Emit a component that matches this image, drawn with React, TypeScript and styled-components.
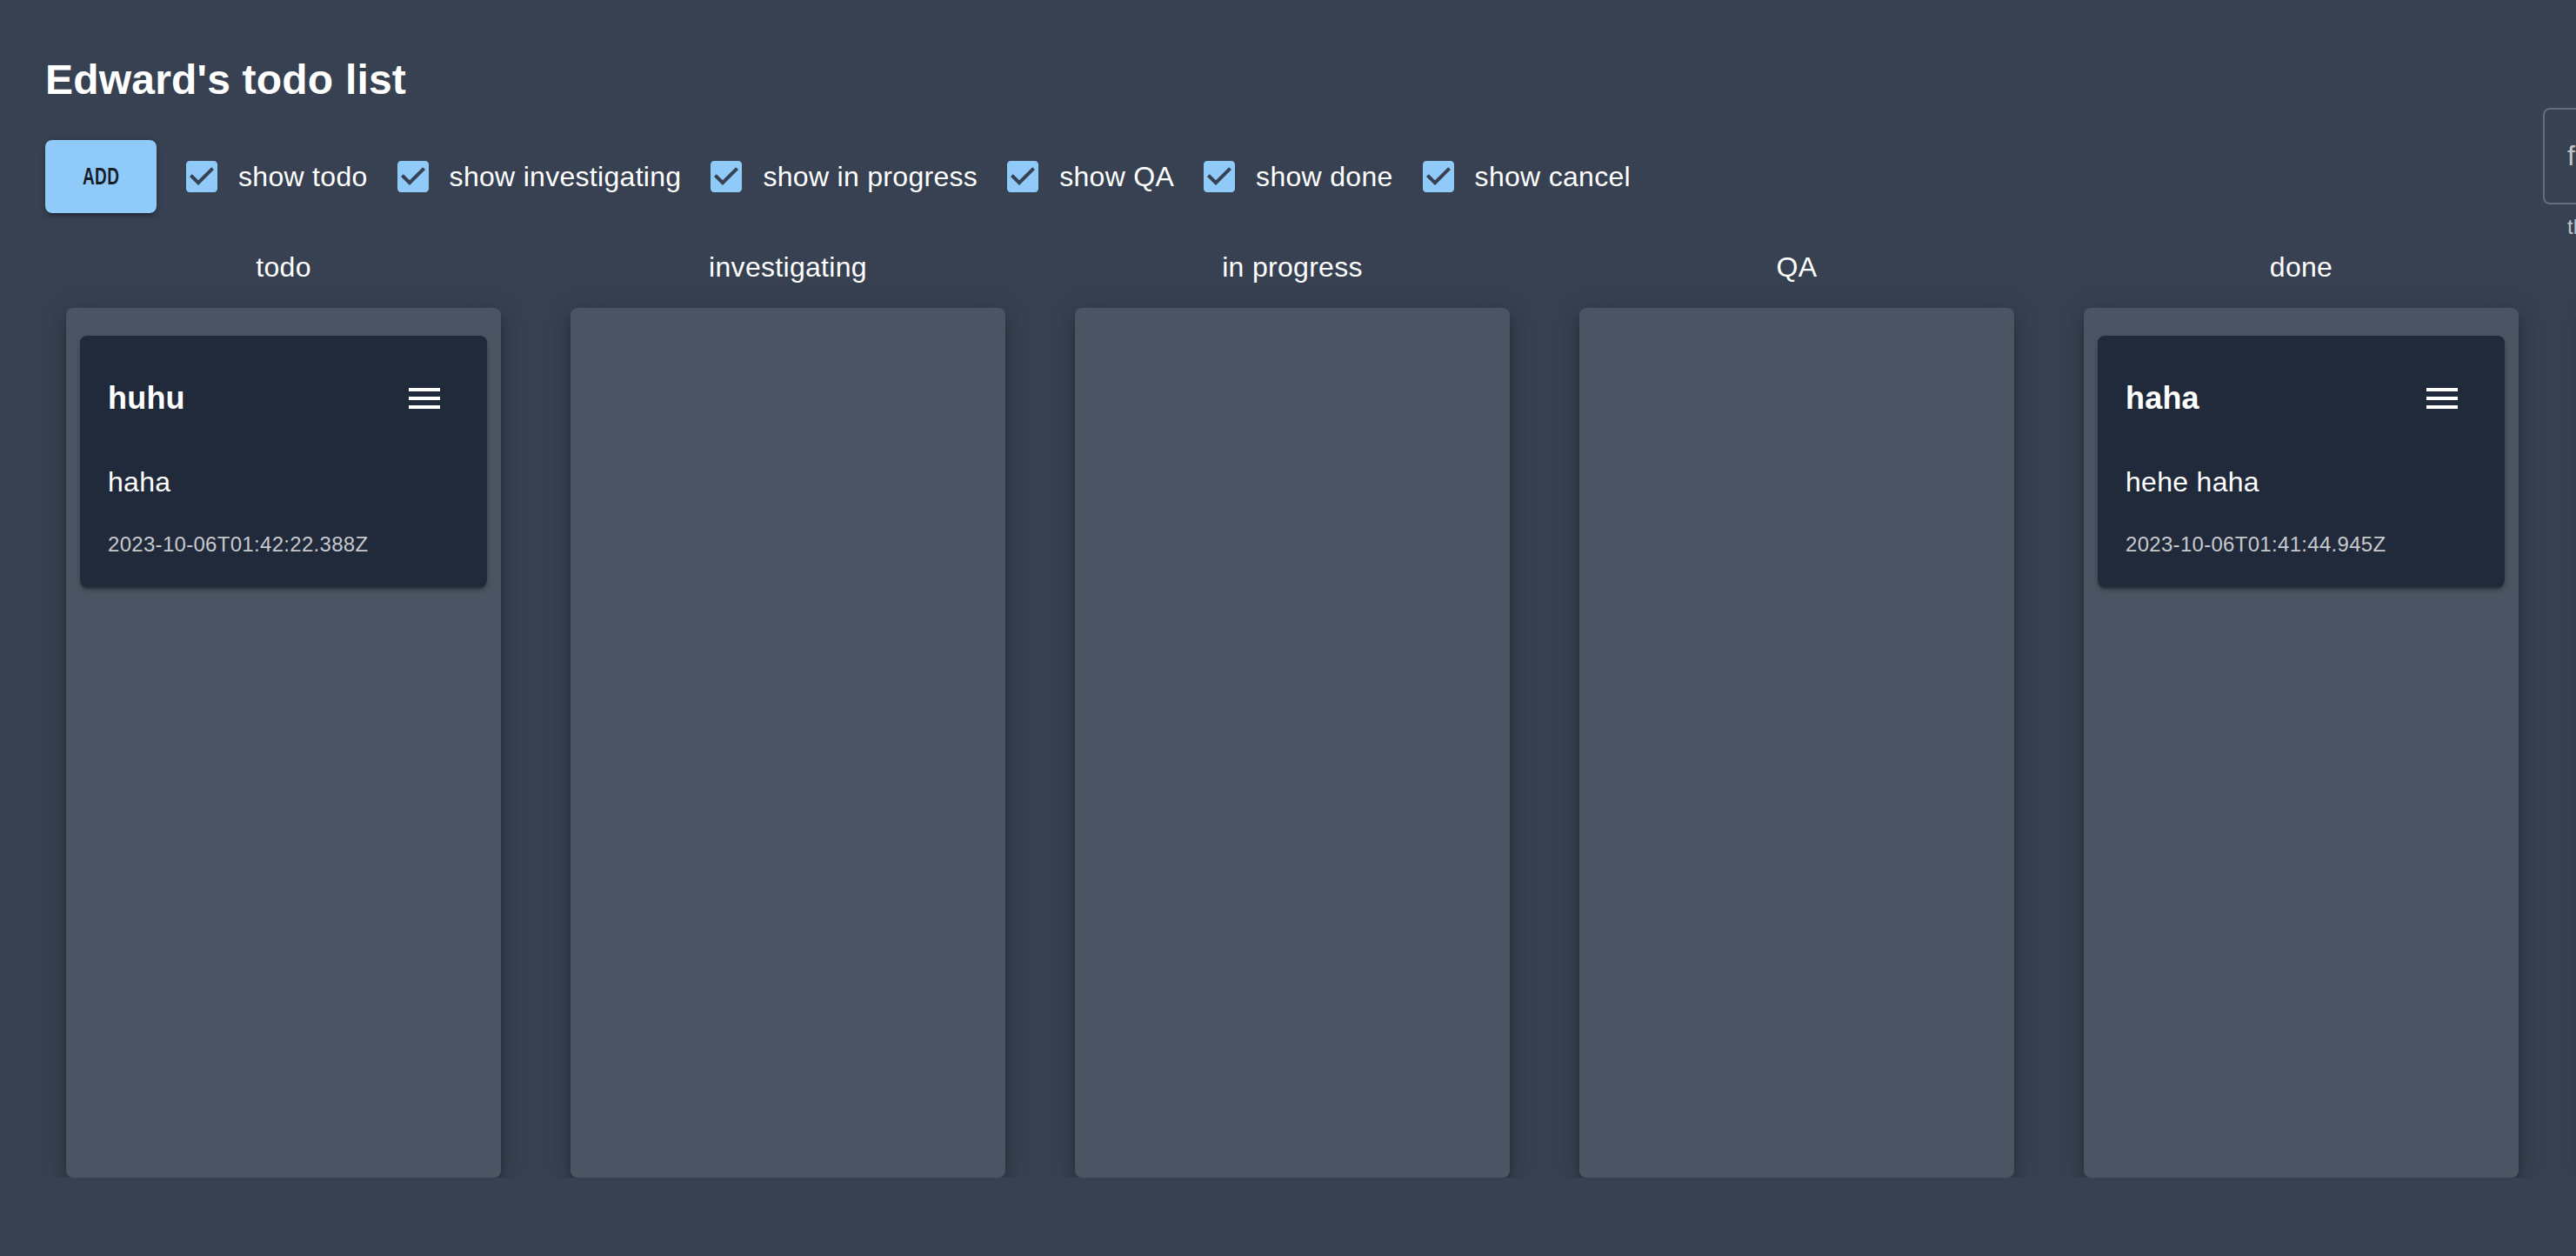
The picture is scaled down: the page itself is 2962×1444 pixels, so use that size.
import React from 'react';
import styled, { createGlobalStyle } from 'styled-components';

const GlobalStyle = createGlobalStyle`
  html, body {
    margin: 0;
    padding: 0;
    background: #374151;
    overflow: hidden;
  }
  body {
    font-family: "Liberation Sans", Arial, Helvetica, sans-serif;
    color: #ffffff;
  }
`;

const Page = styled.div`
  width: max-content;
  padding: 64px 52px 0;
`;

const Title = styled.h1`
  margin: 0;
  font-size: 48px;
  line-height: 56px;
  font-weight: 700;
  letter-spacing: 0.2px;
  color: #ffffff;
`;

const Toolbar = styled.div`
  display: flex;
  align-items: center;
  gap: 34px;
  margin-top: 4px;
`;

const AddButton = styled.button`
  width: 128px;
  height: 84px;
  padding: 0;
  border: 0;
  border-radius: 8px;
  background: #90caf9;
  color: rgba(0, 0, 0, 0.87);
  box-shadow: 0 6px 2px -4px rgba(0, 0, 0, 0.2), 0 4px 4px 0 rgba(0, 0, 0, 0.14),
    0 2px 10px 0 rgba(0, 0, 0, 0.12);
  display: flex;
  align-items: center;
  justify-content: center;
  font-family: inherit;
  cursor: pointer;
`;

const AddText = styled.span`
  display: inline-block;
  font-size: 28px;
  font-weight: 700;
  letter-spacing: 0.5px;
  transform: scaleX(0.68);
`;

const FilterLabel = styled.label`
  display: flex;
  align-items: center;
  gap: 24px;
  cursor: pointer;
`;

const CheckIcon = styled.svg`
  width: 48px;
  height: 48px;
  margin: -6px;
  flex: none;
`;

const FilterText = styled.span`
  font-size: 32px;
  line-height: 48px;
  letter-spacing: 0.3px;
  color: #ffffff;
  white-space: nowrap;
`;

const SearchField = styled.div`
  margin-left: auto;
  width: 576px;
  display: flex;
  flex-direction: column;
`;

const FieldBox = styled.div`
  height: 111px;
  box-sizing: border-box;
  border: 2px solid rgba(255, 255, 255, 0.23);
  border-radius: 8px;
  display: flex;
  align-items: center;
  padding: 0 26px;
  font-size: 32px;
  color: rgba(255, 255, 255, 0.7);
`;

const HelperText = styled.div`
  margin: 6px 28px 0;
  font-size: 24px;
  line-height: 40px;
  color: rgba(255, 255, 255, 0.7);
  white-space: nowrap;
`;

const Board = styled.div`
  display: flex;
  gap: 80px;
  padding: 0 24px;
  margin-top: 8px;
`;

const Column = styled.section`
  width: 500px;
  display: flex;
  flex-direction: column;
`;

const ColumnLabel = styled.div`
  text-align: center;
  font-size: 32px;
  line-height: 36px;
  letter-spacing: 0.3px;
  color: #ffffff;
`;

const ColumnBody = styled.div`
  margin-top: 29px;
  height: 1000px;
  box-sizing: border-box;
  padding: 32px 16px;
  background: #4b5462;
  border-radius: 8px;
  box-shadow: 0 6px 10px -2px rgba(0, 0, 0, 0.2), 0 12px 20px 0 rgba(0, 0, 0, 0.14),
    0 2px 36px 0 rgba(0, 0, 0, 0.12);
  display: flex;
  flex-direction: column;
  gap: 24px;
`;

const Card = styled.article`
  background: #212a3b;
  border-radius: 8px;
  padding: 32px;
  display: flex;
  flex-direction: column;
  box-shadow: 0 4px 2px -2px rgba(0, 0, 0, 0.2), 0 4px 4px 0 rgba(0, 0, 0, 0.14),
    0 2px 6px 0 rgba(0, 0, 0, 0.12);
`;

const CardHeader = styled.div`
  height: 80px;
  display: flex;
  align-items: center;
  justify-content: space-between;
`;

const CardTitle = styled.h2`
  margin: 0;
  font-size: 36px;
  line-height: 36px;
  font-weight: 700;
  letter-spacing: 0.2px;
  color: #ffffff;
`;

const MenuButton = styled.button`
  width: 80px;
  height: 80px;
  padding: 0;
  border: 0;
  border-radius: 50%;
  background: transparent;
  display: flex;
  align-items: center;
  justify-content: center;
  cursor: pointer;
`;

const CardContent = styled.p`
  margin: 32px 0 0;
  font-size: 32px;
  line-height: 48px;
  letter-spacing: 0.3px;
  color: #ffffff;
`;

const CardDate = styled.p`
  margin: 31px 0 0;
  font-size: 24px;
  line-height: 34px;
  letter-spacing: 0.3px;
  color: rgba(255, 255, 255, 0.75);
`;

type Todo = { title: string; content: string; date: string };

const columns: { name: string; todos: Todo[] }[] = [
  { name: 'todo', todos: [{ title: 'huhu', content: 'haha', date: '2023-10-06T01:42:22.388Z' }] },
  { name: 'investigating', todos: [] },
  { name: 'in progress', todos: [] },
  { name: 'QA', todos: [] },
  { name: 'done', todos: [{ title: 'haha', content: 'hehe haha', date: '2023-10-06T01:41:44.945Z' }] },
  { name: 'cancel', todos: [] },
];

const filters = ['show todo', 'show investigating', 'show in progress', 'show QA', 'show done', 'show cancel'];

const CheckedBox = () => (
  <CheckIcon viewBox="0 0 24 24" aria-hidden="true">
    <path
      fill="#90caf9"
      fillRule="evenodd"
      d="M19 3H5c-1.11 0-2 .9-2 2v14c0 1.1.89 2 2 2h14c1.11 0 2-.9 2-2V5c0-1.1-.89-2-2-2zm-9 14l-5-5 1.41-1.41L10 14.17l7.59-7.59L19 8l-9 9z"
    />
  </CheckIcon>
);

const MenuIcon = () => (
  <svg width="48" height="48" viewBox="0 0 24 24" aria-hidden="true">
    <path fill="#ffffff" d="M3 18h18v-2H3v2zm0-5h18v-2H3v2zm0-7v2h18V6H3z" />
  </svg>
);

export default function App() {
  return (
    <>
      <GlobalStyle />
      <Page>
        <Title>Edward's todo list</Title>
        <Toolbar>
          <AddButton>
            <AddText>ADD</AddText>
          </AddButton>
          {filters.map((f) => (
            <FilterLabel key={f}>
              <CheckedBox />
              <FilterText>{f}</FilterText>
            </FilterLabel>
          ))}
          <SearchField>
            <FieldBox>filter</FieldBox>
            <HelperText>the keyword to search</HelperText>
          </SearchField>
        </Toolbar>
        <Board>
          {columns.map((c) => (
            <Column key={c.name}>
              <ColumnLabel>{c.name}</ColumnLabel>
              <ColumnBody>
                {c.todos.map((t) => (
                  <Card key={t.date}>
                    <CardHeader>
                      <CardTitle>{t.title}</CardTitle>
                      <MenuButton aria-label="menu">
                        <MenuIcon />
                      </MenuButton>
                    </CardHeader>
                    <CardContent>{t.content}</CardContent>
                    <CardDate>{t.date}</CardDate>
                  </Card>
                ))}
              </ColumnBody>
            </Column>
          ))}
        </Board>
      </Page>
    </>
  );
}
